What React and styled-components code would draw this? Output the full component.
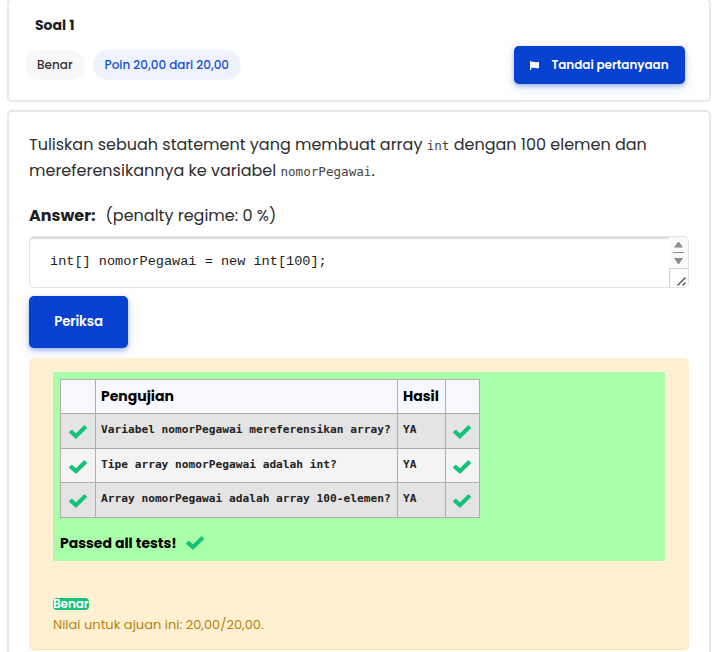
import React from "react";
import styled, { createGlobalStyle } from "styled-components";

const GlobalStyle = createGlobalStyle`
  * { box-sizing: border-box; }
  html, body { margin: 0; }
  body {
    background: #fff;
    color: #2d2d2d;
    font-family: Poppins, Inter, sans-serif;
    font-size: 16px;
    overflow: hidden;
  }
`;

const Page = styled.main`
  display: flex;
  flex-direction: column;
  gap: 8px;
  height: 652px;
  padding: 0 16px 0 7px;
  overflow: hidden;
`;

const Card = styled.section`
  flex: none;
  border: 2px solid #e8e8e8;
  border-radius: 5px;
`;

const InfoCard = styled(Card)`
  height: 104px;
  margin-top: -2px;
  padding: 15px 24px 0 16px;
`;

const QuestionCard = styled(Card)`
  height: 600px;
  padding: 20px;
`;

const Title = styled.h3`
  margin: 0 0 0 10px;
  color: #1d1d1f;
  font-size: 14px;
  font-weight: 700;
  line-height: 20px;
`;

const InfoRow = styled.div`
  display: flex;
  align-items: center;
  gap: 8px;
  margin-top: 11px;
`;

const Pill = styled.span`
  height: 30px;
  padding: 0 0 0 ${(p) => (p.$points ? "11.5px" : "12px")};
  border-radius: 15px;
  font-size: 12px;
  font-weight: 500;
  line-height: 30px;
  white-space: nowrap;
  width: ${(p) => (p.$points ? "148px" : "60px")};
  color: ${(p) => (p.$points ? "#1a4fd3" : "#333")};
  background: ${(p) => (p.$points ? "#eef3ff" : "#f8f8f8")};
`;

const Button = styled.button`
  display: flex;
  align-items: center;
  justify-content: center;
  border: 0;
  border-radius: 5px;
  padding: 0;
  color: #fff;
  background: #0741cf;
  box-shadow: 0 2px 4px rgba(7, 65, 207, 0.35), 0 4px 14px rgba(7, 65, 207, 0.12);
  font-family: inherit;
  font-weight: 600;
`;

const FlagButton = styled(Button)`
  gap: 11px;
  width: 171px;
  height: 38px;
  margin-left: auto;
  font-size: 12px;
  letter-spacing: -0.05px;
`;

const CheckButton = styled(Button)`
  width: 99px;
  height: 52px;
  margin-top: 8px;
  font-size: 13.4px;
  letter-spacing: -0.15px;
`;

const Prompt = styled.p`
  margin: 0;
  height: 51px;
  line-height: 25.5px;
  white-space: nowrap;
`;

const Code = styled.code`
  font-family: Consolas, "DejaVu Sans Mono", monospace;
  font-size: 12.6px;
  line-height: 1;
  color: #444;
`;

const AnswerLine = styled.div`
  display: flex;
  gap: 10px;
  margin-top: 20px;
  line-height: 26px;
`;

const AnswerLabel = styled.strong`
  color: #1d1d1f;
`;

const Editor = styled.div`
  display: flex;
  height: 52px;
  margin-top: 7px;
  border: 1px solid #e2e2e2;
  border-radius: 5px;
  overflow: hidden;
  box-shadow: inset 0 2px 1px #dedede;
`;

const EditorText = styled.pre`
  flex: 1;
  margin: 0;
  padding: 17px 0 0 20px;
  color: #222;
  font: 13.57px/16px "Courier New", "Liberation Mono", monospace;
`;

const EditorSide = styled.div`
  width: 19px;
  background: #fafafa;
`;

const Feedback = styled.div`
  height: 292px;
  margin-top: 10px;
  padding: 14px 24px 0;
  border-bottom: 1px solid #ffe49c;
  border-radius: 5px;
  background: #fff0d1;
`;

const Results = styled.div`
  height: 189px;
  padding: 7px;
  background: #aaffaa;
`;

const Table = styled.table`
  width: 420px;
  table-layout: fixed;
  border-collapse: collapse;
  color: #000;
`;

const Col = styled.col`
  width: ${(p) => p.$w}px;
`;

const HeadCell = styled.th`
  height: 34px;
  padding: 0 0 2px 5px;
  border: 1px solid #adadad;
  background: #f8f9ff;
  font-size: 14px;
  font-weight: 700;
  line-height: 20px;
  text-align: left;
`;

const Row = styled.tr`
  height: ${(p) => p.$h}px;
  background: ${(p) => (p.$alt ? "#f4f4f4" : "#e4e4e4")};
`;

const Cell = styled.td`
  padding: 0 0 2px 5px;
  border: 1px solid #adadad;
  color: #222;
  font: 700 11.2px/16px Consolas, "DejaVu Sans Mono", monospace;
  white-space: nowrap;
`;

const TickCell = styled(Cell)`
  padding: 2px 0 0 ${(p) => (p.$end ? "7px" : "8px")};
  line-height: 0;
`;

const Passed = styled.div`
  display: flex;
  align-items: center;
  gap: 9px;
  margin-top: 15px;
  color: #000;
  font-size: 14px;
  font-weight: 700;
  line-height: 20px;
`;

const Badge = styled.span`
  display: block;
  width: 36px;
  height: 12px;
  margin-top: 37px;
  border-radius: 4px;
  background: #14c27a;
  color: #fff;
  font-size: 12px;
  font-weight: 600;
  line-height: 12px;
  letter-spacing: -0.1px;
`;

const Grade = styled.div`
  margin-top: 5px;
  color: #b58412;
  font-size: 13px;
  line-height: 20px;
`;

const FlagIcon = () => (
  <svg width="10" height="9" viewBox="0 0 10 9" fill="#fff">
    <path d="M0 0h1.2v1C3.4.2 5 2 9 .9v6C6 8 4 6.1 1.2 7.1V9H0z" />
  </svg>
);

const Tick = () => (
  <svg width="18" height="14" viewBox="0 0 18 14" fill="#14c27a">
    <path d="M.3 7 2.2 4.9q.5-.5 1 0L6.9 8.2 14.9.5q.5-.5 1 0L17.8 2.4q.5.5 0 1L7.4 13.5q-.5.5-1 0L.3 8q-.5-.5 0-1z" />
  </svg>
);

const SideControls = () => (
  <svg width="19" height="50" viewBox="0 0 19 50">
    <path d="M5 10.5 9 5h1l4 5.5zM5 21h9l-4 6H9z" fill="#8b8b8b" />
    <path d="M4 15.5h11" stroke="#8b8b8b" />
    <rect x=".5" y="31.5" width="20" height="20" fill="#fff" stroke="#d2d2d2" />
    <path d="m8.5 48.5 8-8M13.5 48.5l3-3" stroke="#555" strokeWidth="1.5" />
  </svg>
);

const tests = [
  { name: "Variabel nomorPegawai mereferensikan array?", h: 35 },
  { name: "Tipe array nomorPegawai adalah int?", h: 34 },
  { name: "Array nomorPegawai adalah array 100-elemen?", h: 35 },
];

export default function App() {
  return (
    <Page>
      <GlobalStyle />
      <InfoCard>
        <Title>Soal 1</Title>
        <InfoRow>
          <Pill>Benar</Pill>
          <Pill $points>Poin 20,00 dari 20,00</Pill>
          <FlagButton><FlagIcon />Tandai pertanyaan</FlagButton>
        </InfoRow>
      </InfoCard>
      <QuestionCard>
        <Prompt>
          Tuliskan sebuah statement yang membuat array <Code>int</Code> dengan 100 elemen dan
          <br />
          mereferensikannya ke variabel <Code>nomorPegawai</Code>.
        </Prompt>
        <AnswerLine>
          <AnswerLabel>Answer:</AnswerLabel>
          <span>(penalty regime: 0 %)</span>
        </AnswerLine>
        <Editor>
          <EditorText>int[] nomorPegawai = new int[100];</EditorText>
          <EditorSide><SideControls /></EditorSide>
        </Editor>
        <CheckButton>Periksa</CheckButton>
        <Feedback>
          <Results>
            <Table>
              <colgroup>
                <Col $w={35} /><Col $w={302} /><Col $w={48} /><Col $w={34} />
              </colgroup>
              <thead>
                <tr>
                  <HeadCell /><HeadCell>Pengujian</HeadCell><HeadCell>Hasil</HeadCell><HeadCell />
                </tr>
              </thead>
              <tbody>
                {tests.map((t, i) => (
                  <Row key={t.name} $h={t.h} $alt={i % 2 === 1}>
                    <TickCell><Tick /></TickCell>
                    <Cell>{t.name}</Cell>
                    <Cell>YA</Cell>
                    <TickCell $end><Tick /></TickCell>
                  </Row>
                ))}
              </tbody>
            </Table>
            <Passed>Passed all tests!<Tick /></Passed>
          </Results>
          <Badge>Benar</Badge>
          <Grade>Nilai untuk ajuan ini: 20,00/20,00.</Grade>
        </Feedback>
      </QuestionCard>
    </Page>
  );
}
